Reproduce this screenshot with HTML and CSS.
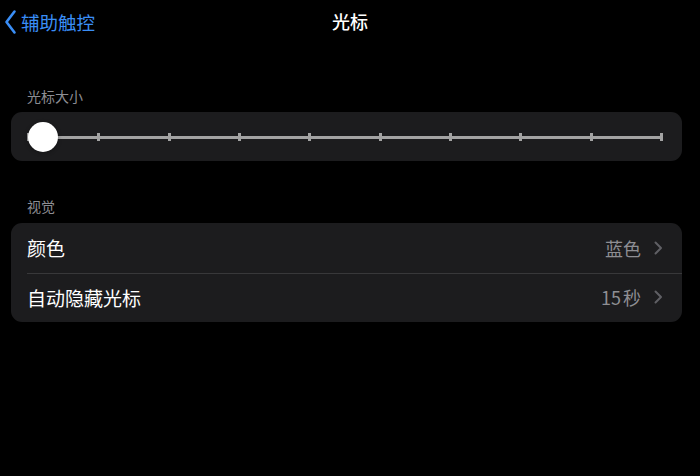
FILE: index.html
```html
<!DOCTYPE html>
<html lang="zh">
<head>
<meta charset="utf-8">
<link rel="stylesheet" href="styles.css">
</head>
<body>
<div class="page">
  <header class="nav">
    <a class="back">
      <svg class="back-icon" width="13" height="26" viewBox="0 0 13 26"><path d="M10.5 2.5 L2.5 13 L10.5 23.5" fill="none" stroke="#3a8ef6" stroke-width="2.6" stroke-linecap="round" stroke-linejoin="round"/></svg>
      <span>辅助触控</span>
    </a>
    <h1 class="title">光标</h1>
  </header>

  <div class="section-label first">光标大小</div>
  <div class="card slider-card">
    <div class="slider">
      <div class="track"></div>
      <div class="ticks">
        <i></i><i></i><i></i><i></i><i></i><i></i><i></i><i></i><i></i><i></i>
      </div>
      <div class="thumb"></div>
    </div>
  </div>

  <div class="section-label second">视觉</div>
  <div class="card list">
    <div class="row">
      <span class="label">颜色</span>
      <span class="value">蓝色</span>
      <svg class="chev" width="10" height="14" viewBox="0 0 10 14"><path d="M2.5 1.5 L8 7 L2.5 12.5" fill="none" stroke="#5f5f64" stroke-width="2" stroke-linecap="round" stroke-linejoin="round"/></svg>
    </div>
    <div class="row">
      <span class="label">自动隐藏光标</span>
      <span class="value">15 秒</span>
      <svg class="chev" width="10" height="14" viewBox="0 0 10 14"><path d="M2.5 1.5 L8 7 L2.5 12.5" fill="none" stroke="#5f5f64" stroke-width="2" stroke-linecap="round" stroke-linejoin="round"/></svg>
    </div>
  </div>
</div>
</body>
</html>
```
FILE: styles.css
```css
* { box-sizing: border-box; }
html, body {
  margin: 0;
  background: #000;
  width: 700px;
  height: 476px;
  overflow: hidden;
  font-family: "Noto Sans CJK SC", "Noto Sans", sans-serif;
  color: #fff;
}
.page {
  padding: 0 18px 0 11px;
}
.nav {
  position: relative;
  height: 45px;
  display: flex;
  align-items: center;
}
.back {
  display: flex;
  align-items: center;
  gap: 4px;
  color: #3a8ef6;
  font-size: 18.5px;
  margin-left: -7px;
  margin-top: -2px;
}
.back-icon { display: block; }
.title {
  position: absolute;
  left: 0;
  right: -7px;
  top: 0;
  height: 45px;
  margin: 0;
  display: flex;
  justify-content: center;
  align-items: center;
  font-size: 18px;
  font-weight: 500;
  margin-top: -2px;
}
.section-label {
  color: #8d8d93;
  font-size: 14px;
  line-height: 18px;
  padding-left: 16px;
}
.section-label.first { margin: 41.5px 0 7.5px; }
.section-label.second { margin: 36px 0 8px; }
.card {
  background: #1c1c1e;
  border-radius: 11px;
}
.slider-card {
  height: 49px;
  display: flex;
  align-items: center;
  padding: 0 19px 0 16px;
}
.slider {
  position: relative;
  flex: 1;
  height: 30px;
}
.track {
  position: absolute;
  left: 0;
  right: 0;
  top: 14px;
  height: 3px;
  background: #a3a3a3;
}
.ticks {
  position: absolute;
  left: 0;
  right: 0;
  top: 11.5px;
  height: 8px;
  display: flex;
  justify-content: space-between;
}
.ticks i {
  display: block;
  width: 3px;
  height: 8px;
  background: #a3a3a3;
}
.thumb {
  position: absolute;
  left: 1px;
  top: 0.5px;
  width: 30px;
  height: 30px;
  border-radius: 50%;
  background: #fff;
  box-shadow: 0 1px 4px rgba(0,0,0,0.3);
}
.list {
  overflow: hidden;
}
.row {
  height: 49.5px;
  display: flex;
  align-items: center;
  padding: 0 19px 0 16px;
  position: relative;
}
.row + .row::before {
  content: "";
  position: absolute;
  left: 16px;
  right: 0;
  top: 0;
  height: 1px;
  background: #38383a;
}
.label {
  flex: 1;
  font-size: 19px;
}
.value {
  color: #8e8e93;
  font-size: 18px;
  word-spacing: -2px;
  margin-right: 12px;
}
.chev { display: block; }
```
